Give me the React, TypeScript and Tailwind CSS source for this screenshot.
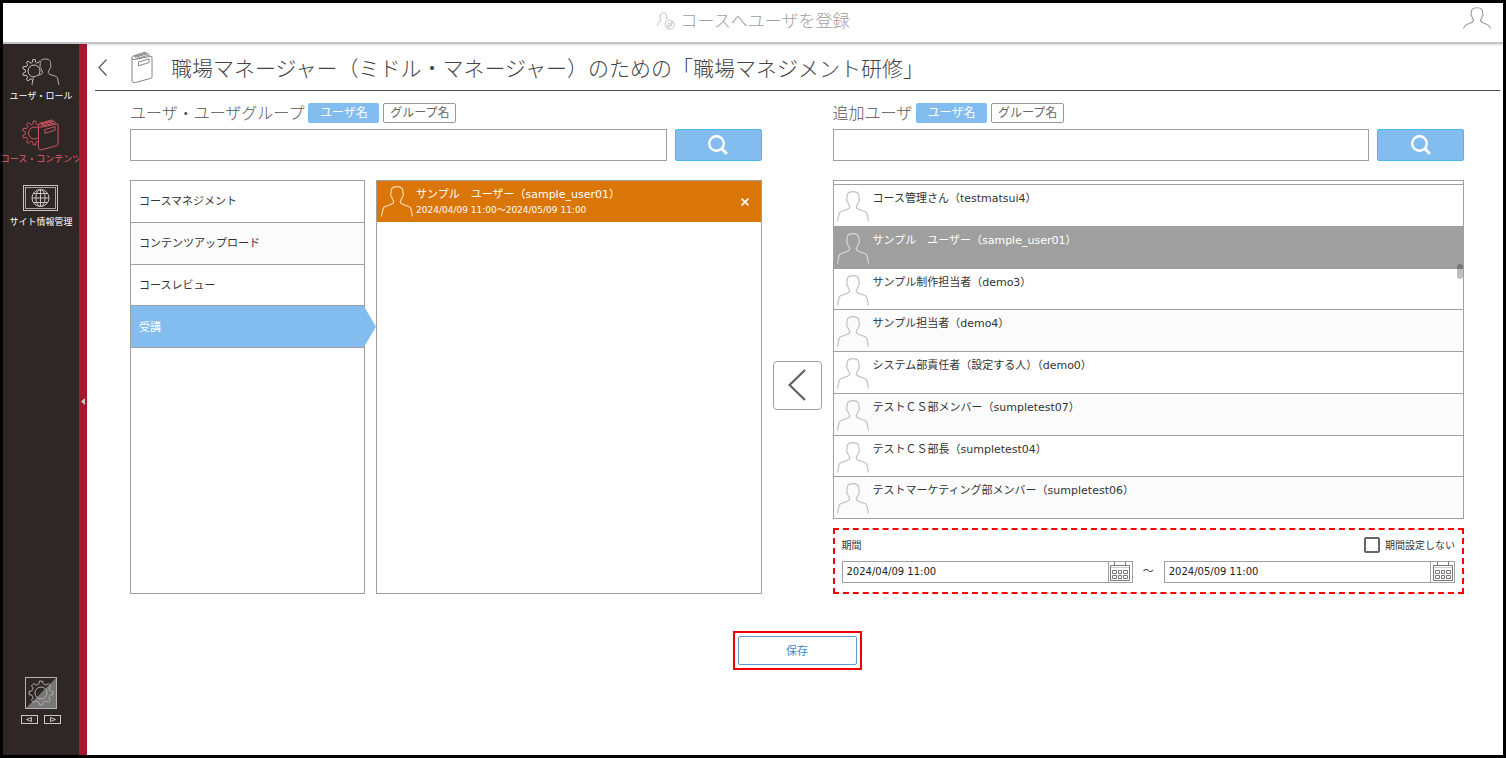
import React, { useState } from 'react';

interface MemberRow {
  name: string;
}

const MEMBERS: MemberRow[] = [
  { name: 'コース管理さん（testmatsui4）' },
  { name: 'サンプル　ユーザー（sample_user01）' },
  { name: 'サンプル制作担当者（demo3）' },
  { name: 'サンプル担当者（demo4）' },
  { name: 'システム部責任者（設定する人）（demo0）' },
  { name: 'テストＣＳ部メンバー（sumpletest07）' },
  { name: 'テストＣＳ部長（sumpletest04）' },
  { name: 'テストマーケティング部メンバー（sumpletest06）' },
];

const ROLES = ['コースマネジメント', 'コンテンツアップロード', 'コースレビュー', '受講'];

const PERSON_PATH =
  'M.5 30.5L2 22.8C2.3 21.3 3.6 20.6 5.5 20C9.5 18.8 12.9 18 12.7 15.8C12.6 14.2 11 13.2 10.8 11.2C9.8 10.6 9.3 8.6 10 7.6C9.8 3 10.6.6 16 .6S22.2 3 22 7.6C22.7 8.6 22.2 10.6 21.2 11.2C21 13.2 19.4 14.2 19.3 15.8C19.1 18 22.5 18.8 26.5 20C28.4 20.6 29.7 21.3 30 22.8L31.5 30.5';

const BOOK_PATH =
  'M1 7C1 8.6 2.6 8.7 4 8.4L20 5.3Q21 5.1 21 6.2V26Q21 27 20 27.3L4.5 31.5C2.2 32 1 31.2 1 29ZM1 7C1 5.8 1.8 5 3.2 4.6L14.5 1M4 6.4L17.5 2.4M5.5 7.6L19 3.8M3 5.5L16 1.7M7.5 11L18 8V11.6L7.5 14.8Z';

const gearPath = (cx: number, cy: number, outer: number, inner: number, teeth: number) => {
  const step = (Math.PI * 2) / teeth;
  const point = (r: number, a: number) =>
    `${(cx + r * Math.cos(a)).toFixed(2)} ${(cy + r * Math.sin(a)).toFixed(2)}`;
  let d = '';
  for (let i = 0; i < teeth; i++) {
    const a = i * step - Math.PI / 2;
    d += `${i === 0 ? 'M' : 'L'}${point(inner, a - step * 0.27)}`;
    d += `L${point(outer, a - step * 0.17)}`;
    d += `L${point(outer, a + step * 0.17)}`;
    d += `L${point(inner, a + step * 0.27)}`;
    d += `Q${point(inner - 0.9, a + step * 0.5)} ${point(inner, a + step * 0.73)}`;
  }
  return d + 'Z';
};

const PersonIcon: React.FC<{ className?: string }> = ({ className }) => (
  <svg className={className} width="32" height="31" viewBox="0 0 32 31" fill="none" stroke="currentColor" strokeWidth="1.2">
    <path d={PERSON_PATH} />
  </svg>
);

const UserRoleIcon = () => (
  <svg width="38" height="32" viewBox="0 0 38 32" stroke="#c9c5c3" strokeWidth="1" fill="none">
    <path d={gearPath(12, 15, 11.5, 9, 10)} strokeLinejoin="round" />
    <circle cx="12" cy="15" r="6" />
    <g transform="translate(9.5 2.5) scale(.87)">
      <path d={PERSON_PATH} fill="#2f2725" />
    </g>
  </svg>
);

const CourseIcon = () => (
  <svg width="38" height="32" viewBox="0 0 38 32" stroke="#d05561" strokeWidth="1" fill="none">
    <path d={gearPath(12.5, 14, 12, 9.4, 10)} strokeLinejoin="round" />
    <circle cx="12.5" cy="14" r="6" />
    <g transform="translate(15.5 -.2) scale(.98)">
      <path d={BOOK_PATH} fill="#2f2725" />
    </g>
  </svg>
);

const SiteIcon = () => (
  <svg width="36" height="32" viewBox="0 0 36 32" stroke="#c9c5c3" strokeWidth="1" fill="none">
    <rect x=".5" y="3.5" width="34" height="25" />
    <rect x="2.5" y="5.5" width="30" height="21" strokeWidth=".8" />
    <circle cx="17.5" cy="16" r="8.5" />
    <ellipse cx="17.5" cy="16" rx="4.6" ry="8.5" />
    <path d="M17.5 7.5V24.5M9 16H26M10.3 11.5H24.7M10.3 20.5H24.7" />
  </svg>
);

const BookIcon = () => (
  <svg width="22" height="33" viewBox="0 0 22 33" fill="none" stroke="#777" strokeWidth=".9">
    <path d={BOOK_PATH} />
  </svg>
);

const CalendarIcon = () => (
  <svg width="22" height="20" viewBox="0 0 22 20" fill="none" stroke="#777" strokeWidth="1">
    <path d="M1.5 3.5H20.5V18.5H1.5ZM5.5 0V3.5M16.5 0V3.5" />
    <path d="M3.5 8.5H7.5V11.5H3.5ZM9.5 8.5H12.5V11.5H9.5ZM14.5 8.5H18.5V11.5H14.5ZM3.5 13.5H7.5V16.5H3.5ZM9.5 13.5H12.5V16.5H9.5ZM14.5 13.5H18.5V16.5H14.5Z" />
    <path d="M2 5.5H20" stroke="#ccc" />
  </svg>
);

const SectionHead: React.FC<{ title: string; inputId: string }> = ({ title, inputId }) => (
  <>
    <div className="flex h-[22px] items-center gap-1">
      <label htmlFor={inputId} className="text-[16px] leading-[22px] font-light whitespace-nowrap text-[#555]">
        {title}
      </label>
      <button type="button" className="h-5 w-[71px] rounded-xs bg-[#83bdef] text-[12px] leading-[18px] text-white">
        ユーザ名
      </button>
      <button type="button" className="h-5 w-[73px] rounded-xs border border-[#999] bg-white text-[12px] leading-[16px] text-[#666]">
        グループ名
      </button>
    </div>
    <div className="mt-[5px] flex gap-2">
      <input id={inputId} type="text" className="h-8 min-w-0 flex-1 border border-[#a0a0a0] bg-white px-2 text-[12px] outline-none" />
      <button
        type="button"
        aria-label="検索"
        className="flex h-8 w-[87px] items-center justify-center rounded-xs border border-[#4db8ec] bg-[#83bdef]"
      >
        <svg width="20" height="20" viewBox="0 0 20 20" fill="none" stroke="#fff">
          <circle cx="8.5" cy="8.5" r="7.3" strokeWidth="2.4" />
          <path d="M13.8 13.8L18.8 18.8" strokeWidth="3" />
        </svg>
      </button>
    </div>
  </>
);

const DateField: React.FC<{ label: string; value: string }> = ({ label, value }) => (
  <div className="flex h-[22px] min-w-0 flex-1 border border-[#a0a0a0]">
    <input
      type="text"
      aria-label={label}
      defaultValue={value}
      className="min-w-0 flex-1 px-1 font-['DejaVu_Sans',sans-serif] text-[10px] leading-[20px] text-[#222] outline-none"
    />
    <button type="button" aria-label="カレンダー" className="flex w-6 items-center justify-center border-l border-[#a0a0a0]">
      <CalendarIcon />
    </button>
  </div>
);

const Sidebar = () => (
  <nav className="flex w-[76px] shrink-0 flex-col items-center justify-between bg-[#2f2725] pt-3 pb-[31px]">
    <div className="flex w-full flex-col gap-[15px] text-center text-[9px] leading-4 whitespace-nowrap text-white">
      <a href="#users" className="flex flex-col items-center">
        <UserRoleIcon />
        ユーザ・ロール
      </a>
      <a href="#courses" className="flex flex-col items-center text-[#e2606c]">
        <CourseIcon />
        コース・コンテンツ
      </a>
      <a href="#site" className="flex flex-col items-center">
        <SiteIcon />
        サイト情報管理
      </a>
    </div>
    <div className="flex flex-col items-center gap-[6px]">
      <button type="button" aria-label="設定">
        <svg width="32" height="32" viewBox="0 0 32 32" fill="none" stroke="#b5b1af">
          <path d="M32 0V32H0Z" fill="#777" stroke="none" />
          <rect x=".5" y=".5" width="31" height="31" />
          <path d={gearPath(16, 16, 12, 9.6, 8)} strokeLinejoin="round" />
          <circle cx="16" cy="16" r="6" />
        </svg>
      </button>
      <div className="flex gap-[6px]">
        <button type="button" aria-label="前へ">
          <svg width="17" height="9" viewBox="0 0 17 9" fill="none" stroke="#c9c5c3">
            <rect x=".5" y=".5" width="16" height="8" />
            <path d="M10.5 2.5V6.5L5.5 4.5Z" />
          </svg>
        </button>
        <button type="button" aria-label="次へ">
          <svg width="17" height="9" viewBox="0 0 17 9" fill="none" stroke="#c9c5c3">
            <rect x=".5" y=".5" width="16" height="8" />
            <path d="M6.5 2.5V6.5L11.5 4.5Z" />
          </svg>
        </button>
      </div>
    </div>
  </nav>
);

export default function App() {
  const [role, setRole] = useState('受講');
  const [selected, setSelected] = useState(1);

  return (
    <div className="flex min-h-screen flex-col border-3 border-black bg-white font-['Noto_Sans','Noto_Sans_CJK_JP',sans-serif] text-[#333]">
      <header className="relative z-10 flex h-[41px] shrink-0 items-center justify-center border-b-2 border-[#c4c4c4] pb-1 shadow-sm">
        <h1 className="flex items-center gap-[6px] text-[17px] leading-6 font-light text-[#a0a0a0]">
          <svg width="18" height="18" viewBox="0 0 18 18" fill="none" stroke="#bbb" strokeWidth=".9">
            <path d="M.5 13.5C.5 10.5 2 9.6 4.3 8.8C3.6 7.8 3 6.6 3 4.8C3 2 4.2.8 6.2.8S9.6 2 9.6 4.8C9.6 6.4 9 7.4 8.6 8.2" />
            <circle cx="12.8" cy="12.6" r="4.5" />
            <path d="M10.2 15.2L11.6 11.4L15.4 10L14 13.8ZM11.6 11.4L14 13.8" />
          </svg>
          コースへユーザを登録
        </h1>
        <button type="button" aria-label="アカウント" className="absolute top-1 right-3">
          <svg width="28" height="22" viewBox="0 0 28 22" fill="none" stroke="#999" strokeWidth="1.1">
            <path d="M.7 21.5C.9 17.5 5 17.2 7.6 16C9.8 15 10.8 14.2 10.4 12.6C9.4 11.6 9 10.4 8.8 9.2C7.9 8.6 7.7 7.2 8.3 6.6C8 2.4 9.4.7 14 .7S20 2.4 19.7 6.6C20.3 7.2 20.1 8.6 19.2 9.2C19 10.4 18.6 11.6 17.6 12.6C17.2 14.2 18.2 15 20.4 16C23 17.2 27.1 17.5 27.3 21.5" />
          </svg>
        </button>
      </header>

      <div className="flex flex-1">
        <Sidebar />
        <button type="button" aria-label="メニューを閉じる" className="flex w-2 shrink-0 items-center justify-center bg-[#a6182d] pt-1">
          <svg width="4" height="7" viewBox="0 0 4 7">
            <path d="M4 0V7L0 3.5Z" fill="#c9c5c3" />
          </svg>
        </button>

        <main className="min-w-0 flex-1">
          <div className="mr-[3px] ml-2 flex h-[47px] items-center border-b border-[#4a4a4a]">
            <button type="button" aria-label="戻る" className="mr-6 ml-[3px]">
              <svg width="9" height="17" viewBox="0 0 9 17" fill="none" stroke="#555" strokeWidth="1.2">
                <path d="M8.5 .5L1 8.5L8.5 16.5" />
              </svg>
            </button>
            <BookIcon />
            <h2 className="ml-[18px] pt-[2px] text-[21px] leading-7 font-light text-[#444]">
              職場マネージャー（ミドル・マネージャー）のための「職場マネジメント研修」
            </h2>
          </div>

          <div className="mr-[39px] ml-[43px] flex pt-[11px]">
            {/* Assigned users */}
            <section className="min-w-0 flex-1">
              <SectionHead title="ユーザ・ユーザグループ" inputId="assigned-search" />
              <div className="mt-[19px] flex h-[414px] gap-[11px]">
                <div className="w-[235px] shrink-0 border border-[#a0a0a0]">
                  <div className="flex h-[167px] flex-col">
                    {ROLES.map((r, i) => (
                      <button
                        key={r}
                        type="button"
                        onClick={() => setRole(r)}
                        className={`relative flex-1 border-b border-[#a0a0a0] px-2 text-left text-[11px] leading-4 ${
                          r === role ? 'bg-[#83bdef] text-white' : i % 2 ? 'bg-[#fbfbfb]' : 'bg-white'
                        }`}
                      >
                        {r}
                        {r === role && (
                          <span className="absolute top-0 left-full h-full w-3 bg-[#83bdef] [clip-path:polygon(0_0,100%_50%,0_100%)]" />
                        )}
                      </button>
                    ))}
                  </div>
                </div>
                <div className="min-w-0 flex-1 border border-[#a0a0a0]">
                  <div className="flex h-[41px] items-center bg-[#da7608] pr-3 pl-1 text-white">
                    <PersonIcon className="shrink-0 text-[#fad9b0]" />
                    <div className="ml-[3px] flex-1 font-['DejaVu_Sans','Noto_Sans_CJK_JP',sans-serif]">
                      <p className="text-[11px] leading-4">サンプル　ユーザー（sample_user01）</p>
                      <p className="text-[9px] leading-[14px]">2024/04/09 11:00～2024/05/09 11:00</p>
                    </div>
                    <button type="button" aria-label="削除">
                      <svg width="8" height="8" viewBox="0 0 8 8" stroke="#fff" strokeWidth="1.6">
                        <path d="M.6 .6L7.4 7.4M7.4 .6L.6 7.4" />
                      </svg>
                    </button>
                  </div>
                </div>
              </div>
            </section>

            <div className="flex w-[71px] shrink-0 items-center justify-center pt-[74px]">
              <button
                type="button"
                aria-label="追加"
                className="flex h-[49px] w-[49px] items-center justify-center rounded-sm border border-[#a0a0a0] bg-white"
              >
                <svg width="18" height="32" viewBox="0 0 18 32" fill="none" stroke="#606060" strokeWidth="2.2">
                  <path d="M17 1L1.5 16L17 31" />
                </svg>
              </button>
            </div>

            {/* Candidates */}
            <section className="min-w-0 flex-1">
              <SectionHead title="追加ユーザ" inputId="candidate-search" />
              <div className="relative mt-[19px] h-[339px] border border-[#a0a0a0] pt-[3px]">
                <ul className="flex h-full flex-col">
                  {MEMBERS.map((m, i) => (
                    <li key={m.name} className="flex flex-1 border-t border-[#a0a0a0]">
                      <button
                        type="button"
                        onClick={() => setSelected(i)}
                        className={`flex flex-1 items-start pt-[6px] pl-[3px] text-left font-['DejaVu_Sans','Noto_Sans_CJK_JP',sans-serif] text-[11px] leading-4 ${
                          i === selected ? 'bg-[#9f9f9f] text-white' : i % 2 ? 'bg-[#fbfbfb]' : 'bg-white'
                        }`}
                      >
                        <PersonIcon className={i === selected ? 'text-[#d8d8d8]' : 'text-[#c0c0c0]'} />
                        <span className="ml-1">{m.name}</span>
                      </button>
                    </li>
                  ))}
                </ul>
                <span className="absolute top-[83px] right-0 h-[15px] w-[6px] rounded-full bg-black/25" />
              </div>

              <div className="mt-[9px] flex h-[66px] flex-col justify-between border-2 border-dashed border-[#f00] px-[7px] pt-[7px] pb-[9px] text-[10px]">
                <div className="flex h-4 items-center justify-between leading-4">
                  <span>期間</span>
                  <label className="flex items-center gap-[5px]">
                    <input type="checkbox" className="h-4 w-4 appearance-none rounded-xs border-2 border-[#666] bg-white" />
                    期間設定しない
                  </label>
                </div>
                <div className="flex">
                  <DateField label="開始日時" value="2024/04/09 11:00" />
                  <span className="w-[31px] text-center text-[11px] leading-5">～</span>
                  <DateField label="終了日時" value="2024/05/09 11:00" />
                </div>
              </div>
            </section>
          </div>

          <div className="mr-[39px] ml-[43px] flex justify-center pt-[37px]">
            <div className="flex h-[39px] w-[129px] border-2 border-[#f00000] px-[3px] py-[3px]">
              <button type="button" className="flex-1 rounded-xs border border-[#5b9bd0] bg-white text-[11px] leading-4 text-[#3f87c6]">
                保存
              </button>
            </div>
          </div>
        </main>
      </div>
    </div>
  );
}
